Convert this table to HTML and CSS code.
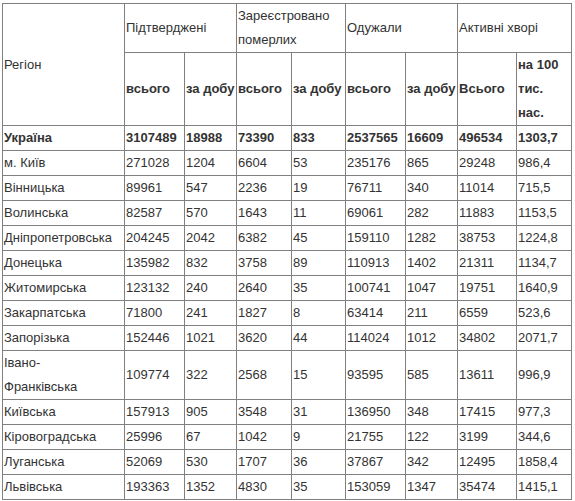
FILE: index.html
```html
<!DOCTYPE html>
<html lang="uk">
<head>
<meta charset="utf-8">
<link rel="stylesheet" href="styles.css">
</head>
<body>
<table class="stats">
  <colgroup>
    <col class="c-region">
    <col class="c-60"><col class="c-52">
    <col class="c-55"><col class="c-54">
    <col class="c-60"><col class="c-52">
    <col class="c-59"><col class="c-55">
  </colgroup>
  <thead>
    <tr>
      <td rowspan="2">Регіон</td>
      <td colspan="2">Підтверджені</td>
      <td colspan="2">Зареєстровано померлих</td>
      <td colspan="2">Одужали</td>
      <td colspan="2">Активні хворі</td>
    </tr>
    <tr class="b">
      <td>всього</td><td>за добу</td>
      <td>всього</td><td>за добу</td>
      <td>всього</td><td>за добу</td>
      <td>Всього</td><td>на 100 тис. нас.</td>
    </tr>
  </thead>
  <tbody>
    <tr class="b"><td>Україна</td><td>3107489</td><td>18988</td><td>73390</td><td>833</td><td>2537565</td><td>16609</td><td>496534</td><td>1303,7</td></tr>
    <tr><td>м. Київ</td><td>271028</td><td>1204</td><td>6604</td><td>53</td><td>235176</td><td>865</td><td>29248</td><td>986,4</td></tr>
    <tr><td>Вінницька</td><td>89961</td><td>547</td><td>2236</td><td>19</td><td>76711</td><td>340</td><td>11014</td><td>715,5</td></tr>
    <tr><td>Волинська</td><td>82587</td><td>570</td><td>1643</td><td>11</td><td>69061</td><td>282</td><td>11883</td><td>1153,5</td></tr>
    <tr><td>Дніпропетровська</td><td>204245</td><td>2042</td><td>6382</td><td>45</td><td>159110</td><td>1282</td><td>38753</td><td>1224,8</td></tr>
    <tr><td>Донецька</td><td>135982</td><td>832</td><td>3758</td><td>89</td><td>110913</td><td>1402</td><td>21311</td><td>1134,7</td></tr>
    <tr><td>Житомирська</td><td>123132</td><td>240</td><td>2640</td><td>35</td><td>100741</td><td>1047</td><td>19751</td><td>1640,9</td></tr>
    <tr><td>Закарпатська</td><td>71800</td><td>241</td><td>1827</td><td>8</td><td>63414</td><td>211</td><td>6559</td><td>523,6</td></tr>
    <tr><td>Запорізька</td><td>152446</td><td>1021</td><td>3620</td><td>44</td><td>114024</td><td>1012</td><td>34802</td><td>2071,7</td></tr>
    <tr><td>Івано-<br>Франківська</td><td>109774</td><td>322</td><td>2568</td><td>15</td><td>93595</td><td>585</td><td>13611</td><td>996,9</td></tr>
    <tr><td>Київська</td><td>157913</td><td>905</td><td>3548</td><td>31</td><td>136950</td><td>348</td><td>17415</td><td>977,3</td></tr>
    <tr><td>Кіровоградська</td><td>25996</td><td>67</td><td>1042</td><td>9</td><td>21755</td><td>122</td><td>3199</td><td>344,6</td></tr>
    <tr><td>Луганська</td><td>52069</td><td>530</td><td>1707</td><td>36</td><td>37867</td><td>342</td><td>12495</td><td>1858,4</td></tr>
    <tr><td>Львівська</td><td>193363</td><td>1352</td><td>4830</td><td>35</td><td>153059</td><td>1347</td><td>35474</td><td>1415,1</td></tr>
  </tbody>
</table>
</body>
</html>
```

FILE: styles.css
```css
html, body {
  margin: 0;
  padding: 0;
  background: #fff;
}
.stats {
  margin: 3px 0 0 2px;
  border-collapse: collapse;
  table-layout: fixed;
  width: 570px;
  font-family: "Liberation Sans", Arial, sans-serif;
  font-size: 13px;
  line-height: 24px;
  color: #333;
}
.stats td {
  border: 1px solid #808080;
  padding: 0 0 0 1px;
  vertical-align: middle;
  text-align: left;
  overflow: hidden;
}
.stats .b td {
  font-weight: bold;
}
.c-region { width: 122px; }
.c-60 { width: 60px; }
.c-52 { width: 52px; }
.c-55 { width: 55px; }
.c-54 { width: 54px; }
.c-59 { width: 59px; }
```
